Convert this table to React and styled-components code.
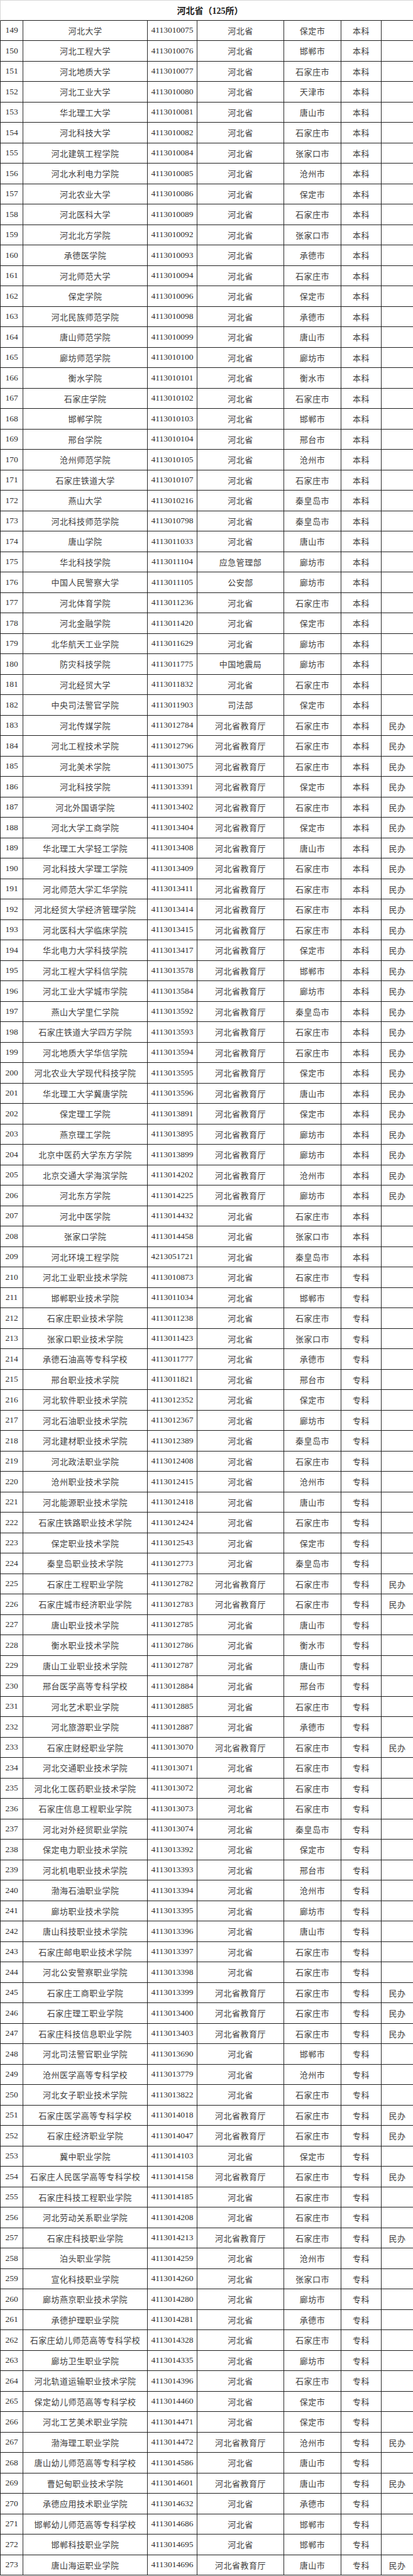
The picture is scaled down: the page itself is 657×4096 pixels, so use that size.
import styled, { createGlobalStyle } from "styled-components";

const GlobalStyle = createGlobalStyle`
  html, body {
    margin: 0;
    padding: 0;
    background: #fff;
  }
  body {
    font-family: "Liberation Serif", "Noto Sans CJK SC", serif;
    color: #333;
  }
`;

const HB = "河北省";
const EDU = "河北省教育厅";
const BK = "本科";
const ZK = "专科";
const MB = "民办";

// [name, code, authority, city, level, ownership]
const schools = [
  ["河北大学", "4113010075", HB, "保定市", BK],
  ["河北工程大学", "4113010076", HB, "邯郸市", BK],
  ["河北地质大学", "4113010077", HB, "石家庄市", BK],
  ["河北工业大学", "4113010080", HB, "天津市", BK],
  ["华北理工大学", "4113010081", HB, "唐山市", BK],
  ["河北科技大学", "4113010082", HB, "石家庄市", BK],
  ["河北建筑工程学院", "4113010084", HB, "张家口市", BK],
  ["河北水利电力学院", "4113010085", HB, "沧州市", BK],
  ["河北农业大学", "4113010086", HB, "保定市", BK],
  ["河北医科大学", "4113010089", HB, "石家庄市", BK],
  ["河北北方学院", "4113010092", HB, "张家口市", BK],
  ["承德医学院", "4113010093", HB, "承德市", BK],
  ["河北师范大学", "4113010094", HB, "石家庄市", BK],
  ["保定学院", "4113010096", HB, "保定市", BK],
  ["河北民族师范学院", "4113010098", HB, "承德市", BK],
  ["唐山师范学院", "4113010099", HB, "唐山市", BK],
  ["廊坊师范学院", "4113010100", HB, "廊坊市", BK],
  ["衡水学院", "4113010101", HB, "衡水市", BK],
  ["石家庄学院", "4113010102", HB, "石家庄市", BK],
  ["邯郸学院", "4113010103", HB, "邯郸市", BK],
  ["邢台学院", "4113010104", HB, "邢台市", BK],
  ["沧州师范学院", "4113010105", HB, "沧州市", BK],
  ["石家庄铁道大学", "4113010107", HB, "石家庄市", BK],
  ["燕山大学", "4113010216", HB, "秦皇岛市", BK],
  ["河北科技师范学院", "4113010798", HB, "秦皇岛市", BK],
  ["唐山学院", "4113011033", HB, "唐山市", BK],
  ["华北科技学院", "4113011104", "应急管理部", "廊坊市", BK],
  ["中国人民警察大学", "4113011105", "公安部", "廊坊市", BK],
  ["河北体育学院", "4113011236", HB, "石家庄市", BK],
  ["河北金融学院", "4113011420", HB, "保定市", BK],
  ["北华航天工业学院", "4113011629", HB, "廊坊市", BK],
  ["防灾科技学院", "4113011775", "中国地震局", "廊坊市", BK],
  ["河北经贸大学", "4113011832", HB, "石家庄市", BK],
  ["中央司法警官学院", "4113011903", "司法部", "保定市", BK],
  ["河北传媒学院", "4113012784", EDU, "石家庄市", BK, MB],
  ["河北工程技术学院", "4113012796", EDU, "石家庄市", BK, MB],
  ["河北美术学院", "4113013075", EDU, "石家庄市", BK, MB],
  ["河北科技学院", "4113013391", EDU, "保定市", BK, MB],
  ["河北外国语学院", "4113013402", EDU, "石家庄市", BK, MB],
  ["河北大学工商学院", "4113013404", EDU, "保定市", BK, MB],
  ["华北理工大学轻工学院", "4113013408", EDU, "唐山市", BK, MB],
  ["河北科技大学理工学院", "4113013409", EDU, "石家庄市", BK, MB],
  ["河北师范大学汇华学院", "4113013411", EDU, "石家庄市", BK, MB],
  ["河北经贸大学经济管理学院", "4113013414", EDU, "石家庄市", BK, MB],
  ["河北医科大学临床学院", "4113013415", EDU, "石家庄市", BK, MB],
  ["华北电力大学科技学院", "4113013417", EDU, "保定市", BK, MB],
  ["河北工程大学科信学院", "4113013578", EDU, "邯郸市", BK, MB],
  ["河北工业大学城市学院", "4113013584", EDU, "廊坊市", BK, MB],
  ["燕山大学里仁学院", "4113013592", EDU, "秦皇岛市", BK, MB],
  ["石家庄铁道大学四方学院", "4113013593", EDU, "石家庄市", BK, MB],
  ["河北地质大学华信学院", "4113013594", EDU, "石家庄市", BK, MB],
  ["河北农业大学现代科技学院", "4113013595", EDU, "保定市", BK, MB],
  ["华北理工大学冀唐学院", "4113013596", EDU, "唐山市", BK, MB],
  ["保定理工学院", "4113013891", EDU, "保定市", BK, MB],
  ["燕京理工学院", "4113013895", EDU, "廊坊市", BK, MB],
  ["北京中医药大学东方学院", "4113013899", EDU, "廊坊市", BK, MB],
  ["北京交通大学海滨学院", "4113014202", EDU, "沧州市", BK, MB],
  ["河北东方学院", "4113014225", EDU, "廊坊市", BK, MB],
  ["河北中医学院", "4113014432", HB, "石家庄市", BK],
  ["张家口学院", "4113014458", HB, "张家口市", BK],
  ["河北环境工程学院", "4213051721", HB, "秦皇岛市", BK],
  ["河北工业职业技术学院", "4113010873", HB, "石家庄市", ZK],
  ["邯郸职业技术学院", "4113011034", HB, "邯郸市", ZK],
  ["石家庄职业技术学院", "4113011238", HB, "石家庄市", ZK],
  ["张家口职业技术学院", "4113011423", HB, "张家口市", ZK],
  ["承德石油高等专科学校", "4113011777", HB, "承德市", ZK],
  ["邢台职业技术学院", "4113011821", HB, "邢台市", ZK],
  ["河北软件职业技术学院", "4113012352", HB, "保定市", ZK],
  ["河北石油职业技术学院", "4113012367", HB, "廊坊市", ZK],
  ["河北建材职业技术学院", "4113012389", HB, "秦皇岛市", ZK],
  ["河北政法职业学院", "4113012408", HB, "石家庄市", ZK],
  ["沧州职业技术学院", "4113012415", HB, "沧州市", ZK],
  ["河北能源职业技术学院", "4113012418", HB, "唐山市", ZK],
  ["石家庄铁路职业技术学院", "4113012424", HB, "石家庄市", ZK],
  ["保定职业技术学院", "4113012543", HB, "保定市", ZK],
  ["秦皇岛职业技术学院", "4113012773", HB, "秦皇岛市", ZK],
  ["石家庄工程职业学院", "4113012782", EDU, "石家庄市", ZK, MB],
  ["石家庄城市经济职业学院", "4113012783", EDU, "石家庄市", ZK, MB],
  ["唐山职业技术学院", "4113012785", HB, "唐山市", ZK],
  ["衡水职业技术学院", "4113012786", HB, "衡水市", ZK],
  ["唐山工业职业技术学院", "4113012787", HB, "唐山市", ZK],
  ["邢台医学高等专科学校", "4113012884", HB, "邢台市", ZK],
  ["河北艺术职业学院", "4113012885", HB, "石家庄市", ZK],
  ["河北旅游职业学院", "4113012887", HB, "承德市", ZK],
  ["石家庄财经职业学院", "4113013070", EDU, "石家庄市", ZK, MB],
  ["河北交通职业技术学院", "4113013071", HB, "石家庄市", ZK],
  ["河北化工医药职业技术学院", "4113013072", HB, "石家庄市", ZK],
  ["石家庄信息工程职业学院", "4113013073", HB, "石家庄市", ZK],
  ["河北对外经贸职业学院", "4113013074", HB, "秦皇岛市", ZK],
  ["保定电力职业技术学院", "4113013392", HB, "保定市", ZK],
  ["河北机电职业技术学院", "4113013393", HB, "邢台市", ZK],
  ["渤海石油职业学院", "4113013394", HB, "沧州市", ZK],
  ["廊坊职业技术学院", "4113013395", HB, "廊坊市", ZK],
  ["唐山科技职业技术学院", "4113013396", HB, "唐山市", ZK],
  ["石家庄邮电职业技术学院", "4113013397", HB, "石家庄市", ZK],
  ["河北公安警察职业学院", "4113013398", HB, "石家庄市", ZK],
  ["石家庄工商职业学院", "4113013399", EDU, "石家庄市", ZK, MB],
  ["石家庄理工职业学院", "4113013400", EDU, "石家庄市", ZK, MB],
  ["石家庄科技信息职业学院", "4113013403", EDU, "石家庄市", ZK, MB],
  ["河北司法警官职业学院", "4113013690", HB, "邯郸市", ZK],
  ["沧州医学高等专科学校", "4113013779", HB, "沧州市", ZK],
  ["河北女子职业技术学院", "4113013822", HB, "石家庄市", ZK],
  ["石家庄医学高等专科学校", "4113014018", EDU, "石家庄市", ZK, MB],
  ["石家庄经济职业学院", "4113014047", EDU, "石家庄市", ZK, MB],
  ["冀中职业学院", "4113014103", HB, "保定市", ZK],
  ["石家庄人民医学高等专科学校", "4113014158", EDU, "石家庄市", ZK, MB],
  ["石家庄科技工程职业学院", "4113014185", HB, "石家庄市", ZK],
  ["河北劳动关系职业学院", "4113014208", HB, "石家庄市", ZK],
  ["石家庄科技职业学院", "4113014213", EDU, "石家庄市", ZK, MB],
  ["泊头职业学院", "4113014259", HB, "沧州市", ZK],
  ["宣化科技职业学院", "4113014260", HB, "张家口市", ZK],
  ["廊坊燕京职业技术学院", "4113014280", HB, "廊坊市", ZK],
  ["承德护理职业学院", "4113014281", HB, "承德市", ZK],
  ["石家庄幼儿师范高等专科学校", "4113014328", HB, "石家庄市", ZK],
  ["廊坊卫生职业学院", "4113014335", HB, "廊坊市", ZK],
  ["河北轨道运输职业技术学院", "4113014396", HB, "石家庄市", ZK],
  ["保定幼儿师范高等专科学校", "4113014460", HB, "保定市", ZK],
  ["河北工艺美术职业学院", "4113014471", HB, "保定市", ZK],
  ["渤海理工职业学院", "4113014472", EDU, "沧州市", ZK, MB],
  ["唐山幼儿师范高等专科学校", "4113014586", HB, "唐山市", ZK],
  ["曹妃甸职业技术学院", "4113014601", EDU, "唐山市", ZK, MB],
  ["承德应用技术职业学院", "4113014632", HB, "承德市", ZK],
  ["邯郸幼儿师范高等专科学校", "4113014686", HB, "邯郸市", ZK],
  ["邯郸科技职业学院", "4113014695", HB, "邯郸市", ZK],
  ["唐山海运职业学院", "4113014696", EDU, "唐山市", ZK, MB],
];

const Sheet = styled.div`
  width: 657px;
  background: #fff;
`;

const TitleRow = styled.div`
  height: 32.5px;
  box-sizing: border-box;
  display: flex;
  align-items: center;
  justify-content: center;
  border-top: 1px solid #d6d6d6;
  border-left: 1px solid #d6d6d6;
  border-bottom: 1px solid #1e1e1e;
  font-size: 14px;
  font-weight: 700;
  color: #222;
  padding-left: 10px;
`;

const Row = styled.div`
  height: 32.5px;
  box-sizing: border-box;
  display: grid;
  grid-template-columns: 36px 198px 79px 138px 91px 64px 51px;
  border-bottom: 1px solid #1e1e1e;
`;

const Cell = styled.div`
  display: flex;
  align-items: center;
  justify-content: center;
  border-left: 1px solid #2a2a2a;
  white-space: nowrap;
  overflow: hidden;
  color: ${(p) => (p.$num ? "#2e2e2e" : "#404040")};
  font-size: ${(p) => (p.$num ? "13.5px" : "13px")};
  letter-spacing: ${(p) => (p.$num ? "0" : "0.5px")};
`;

function SchoolRow({ no, school }) {
  const [name, code, authority, city, level, kind] = school;
  return (
    <Row>
      <Cell $num>{no}</Cell>
      <Cell>{name}</Cell>
      <Cell $num>{code}</Cell>
      <Cell>{authority}</Cell>
      <Cell>{city}</Cell>
      <Cell>{level}</Cell>
      <Cell>{kind || ""}</Cell>
    </Row>
  );
}

export default function App() {
  return (
    <>
      <GlobalStyle />
      <Sheet>
        <TitleRow>河北省（125所）</TitleRow>
        {schools.map((s, i) => (
          <SchoolRow key={s[1]} no={149 + i} school={s} />
        ))}
      </Sheet>
    </>
  );
}
